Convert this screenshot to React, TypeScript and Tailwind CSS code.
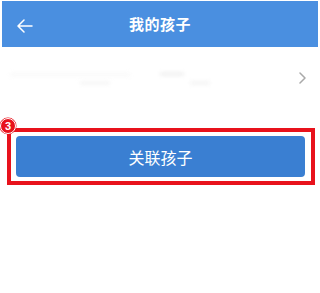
import React from "react";

const FONT = { fontFamily: '"Noto Sans CJK SC", "Noto Sans", sans-serif' };

function BackArrow() {
  return (
    <svg width="16" height="14" viewBox="0 0 16 14" fill="none" stroke="white" strokeWidth="1.5" strokeLinecap="round" strokeLinejoin="round">
      <path d="M15 7H1.5M7 1L1 7l6 6" />
    </svg>
  );
}

function Chevron() {
  return (
    <svg width="7" height="12" viewBox="0 0 7 12" fill="none" stroke="#a9a9a9" strokeWidth="1.5" strokeLinecap="round" strokeLinejoin="round">
      <path d="M1 1l5 5-5 5" />
    </svg>
  );
}

export default function App() {
  return (
    <div className="w-[320px] h-[293px] bg-white overflow-hidden pt-[1px]" style={FONT}>
      {/* header */}
      <div className="relative mx-[2px] h-[46px] bg-[#4a8fe0] flex items-center justify-center">
        <div className="absolute left-[15px] top-[18px]">
          <BackArrow />
        </div>
        <span className="text-white text-[15px] font-bold tracking-[0.5px]">我的孩子</span>
      </div>

      {/* child row (blurred in source) */}
      <div className="h-[62px] flex items-center justify-between pl-[10px] pr-[14px]">
        <div className="flex flex-col gap-[6px] blur-[2px] opacity-60">
          <div className="flex items-center gap-[30px]">
            <div className="w-[120px] h-[3px] bg-[#f2f2f2] rounded" />
            <div className="w-[24px] h-[2px] bg-[#cfcfcf] rounded" />
          </div>
          <div className="flex items-center gap-[80px] pl-[70px]">
            <div className="w-[30px] h-[2px] bg-[#e2e2e2] rounded" />
            <div className="w-[20px] h-[2px] bg-[#dcdcdc] rounded" />
          </div>
        </div>
        <Chevron />
      </div>

      {/* highlighted button */}
      <div className="relative mt-[19px] ml-[7px] w-[308px] h-[57px] border-4 border-[#e8121c] pl-[5px] pr-[6px] py-[4px]">
        <div className="absolute -left-[11px] -top-[14px] w-[16px] h-[16px] rounded-full bg-[#e8121c] border-[1.5px] border-white shadow-[0_0_0_0.5px_#e8121c] flex items-center justify-center">
          <span className="text-white text-[11px] font-bold leading-none" style={{ fontFamily: '"Liberation Sans", sans-serif' }}>3</span>
        </div>
        <button
          type="button"
          className="w-full h-full rounded-[4px] bg-[#3a7fd2] text-white text-[16px] flex items-center justify-center"
        >
          关联孩子
        </button>
      </div>
    </div>
  );
}
